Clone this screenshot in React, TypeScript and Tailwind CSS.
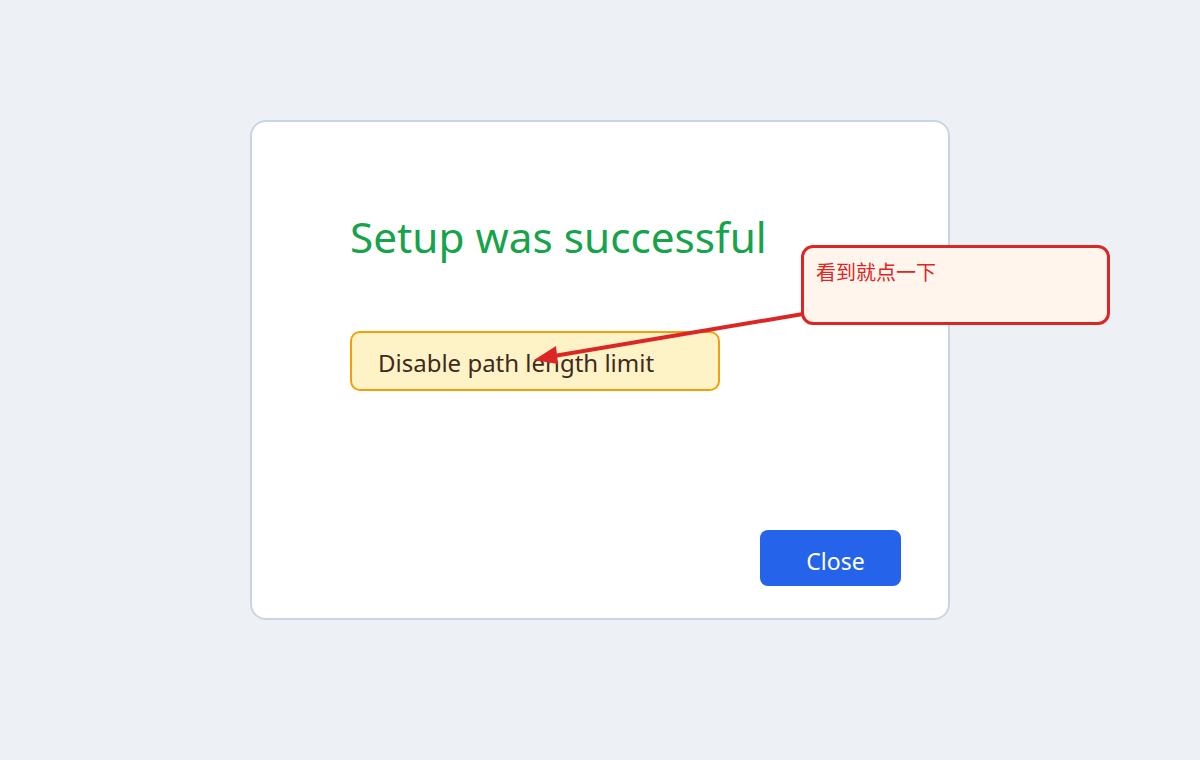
import React from "react";

const font = { fontFamily: '"Noto Sans", "Open Sans", "Noto Sans CJK SC", sans-serif' };

export default function App() {
  return (
    <div className="relative min-h-[760px] w-full bg-[#edf1f6]" style={font}>
      <div className="flex justify-center pt-[120px]">
        <div className="flex h-[500px] w-[700px] flex-col rounded-[16px] border-2 border-[#cbd5e1] bg-white px-[98px] pt-[85px] pb-[32px]">
          <h1 className="text-[42.3px] leading-[60px] font-normal text-[#16a34a]">
            Setup was successful
          </h1>
          <div className="mt-[64px] flex h-[60px] w-[370px] items-center rounded-[10px] border-2 border-[#f59e0b] bg-[#fef3c7] px-[26px] pt-[3px]">
            <span className="text-[24px] text-[#3f2a1d]">Disable path length limit</span>
          </div>
          <div className="mt-auto flex justify-end">
            <button
              type="button"
              className="-mr-[51px] flex h-[56px] w-[141px] items-center justify-center rounded-[8px] bg-[#2563eb] pl-[10px] pt-[6px] text-[23px] text-white"
            >
              Close
            </button>
          </div>
        </div>
      </div>

      {/* annotation */}
      <svg className="pointer-events-none absolute top-0 left-0" width="1200" height="760">
        <line x1="803" y1="314" x2="548" y2="357" stroke="#dc2626" strokeWidth="4" />
        <polygon points="534,360 556,346 558,364" fill="#dc2626" />
      </svg>
      <div className="absolute top-[245px] left-[801px] h-[80px] w-[309px] rounded-[12px] border-[3px] border-[#dc2626] bg-[#fff5ec] px-[12px] pt-[11px]">
        <span className="text-[20px] leading-[26px] text-[#dc2626]" style={{ fontFamily: '"Noto Sans CJK SC", sans-serif' }}>
          看到就点一下
        </span>
      </div>
    </div>
  );
}
